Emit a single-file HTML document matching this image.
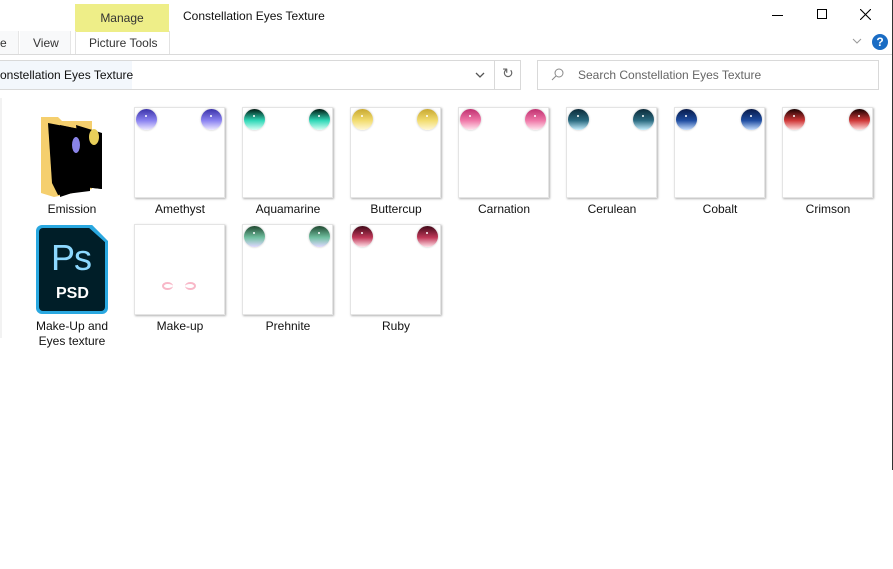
<!DOCTYPE html>
<html><head><meta charset="utf-8"><style>
*{margin:0;padding:0;box-sizing:border-box}
body{width:893px;height:569px;overflow:hidden;background:#fff;font-family:"Segoe UI","Liberation Sans",sans-serif;font-size:12px;color:#000;position:relative}
.a{position:absolute}
.th{position:absolute;width:91px;height:91px;background:#fff;border:1px solid #e4e4e4;box-shadow:1px 1px 2px rgba(0,0,0,.3)}
.eye{position:absolute;width:21px;height:21px;border-radius:50%;top:1px;box-shadow:0 0 2px rgba(0,0,0,.25)}
.eye:after{content:"";position:absolute;left:9px;top:6px;width:2px;height:2px;background:#fff;border-radius:50%}
.lbl{position:absolute;width:108px;text-align:center;font-size:12px;color:#111}
</style></head><body>
<div class="a" style="left:75px;top:4px;width:94px;height:28px;background:#eeee88"></div>
<div class="a" style="left:75px;top:11px;width:94px;text-align:center;color:#333">Manage</div>
<div class="a" style="left:183px;top:9px;color:#111">Constellation Eyes Texture</div>
<div class="a" style="left:0;top:31px;width:19px;height:23px;background:#f8f9fa;border-right:1px solid #e6e6e6"></div>
<div class="a" style="left:0;top:36px;color:#333">e</div>
<div class="a" style="left:20px;top:31px;width:51px;height:23px;background:#f8f9fa;border-right:1px solid #e6e6e6"></div>
<div class="a" style="left:33px;top:36px;color:#333">View</div>
<div class="a" style="left:75px;top:31px;width:95px;height:23px;border-left:1px solid #e2e2e2;border-right:1px solid #e2e2e2"></div>
<div class="a" style="left:89px;top:36px;color:#333">Picture Tools</div>
<div class="a" style="left:0;top:54px;width:893px;height:1px;background:#dadada"></div>
<div class="a" style="left:772px;top:15px;width:11px;height:1px;background:#000"></div>
<div class="a" style="left:817px;top:9px;width:10px;height:10px;border:1px solid #000"></div>
<svg class="a" style="left:860px;top:9px" width="11" height="11"><path d="M0 0L11 11M11 0L0 11" stroke="#000" stroke-width="1.1"/></svg>
<svg class="a" style="left:852px;top:38px" width="10" height="6"><path d="M1 1L5 5L9 1" stroke="#999" fill="none"/></svg>
<div class="a" style="left:872px;top:34px;width:16px;height:16px;border-radius:50%;background:#1a6cc4;color:#fff;font-weight:bold;font-size:12px;text-align:center;line-height:16px">?</div>
<div class="a" style="left:0;top:61px;width:132px;height:28px;background:#f3f7fc"></div>
<div class="a" style="left:0;top:60px;width:521px;height:30px;border:1px solid #d9d9d9;border-left:none"></div>
<div class="a" style="left:0;top:68px;color:#111">onstellation Eyes Texture</div>
<svg class="a" style="left:475px;top:72px" width="10" height="6"><path d="M1 1L5 5L9 1" stroke="#555" fill="none" stroke-width="1.3"/></svg>
<div class="a" style="left:494px;top:61px;width:1px;height:28px;background:#d9d9d9"></div>
<div class="a" style="left:502px;top:65px;color:#666;font-size:14px">↻</div>
<div class="a" style="left:537px;top:60px;width:342px;height:30px;border:1px solid #d9d9d9"></div>
<svg class="a" style="left:551px;top:68px" width="13" height="13"><circle cx="8" cy="5" r="4" stroke="#888" fill="none"/><path d="M5 8L1 12" stroke="#888"/></svg>
<div class="a" style="left:578px;top:68px;color:#666">Search Constellation Eyes Texture</div>
<div class="a" style="left:0;top:98px;width:2px;height:240px;background:#f2f2f2"></div>
<div class="a" style="left:892px;top:0;width:1px;height:470px;background:#333"></div>
<svg class="a" style="left:40px;top:113px" width="66" height="88">
<path d="M1 4L18 4L22 8L52 8L52 76L14 84L1 80Z" fill="#f5cf6e"/>
<path d="M8 10L50 18L50 78L18 82L12 70Z" fill="#000"/>
<path d="M20 12L44 17L44 74L62 76L62 22L44 17L44 76L20 84Z" fill="#000"/>
<path d="M36 12L62 20L62 76L44 74Z" fill="#000"/>
<ellipse cx="36" cy="32" rx="4" ry="8" fill="#8a84e8"/>
<ellipse cx="54" cy="24" rx="5" ry="8" fill="#e8cf5a"/>
</svg>
<div class="lbl" style="left:18px;top:202px">Emission</div>
<div class="a" style="left:36px;top:225px;width:72px;height:89px;background:#2aa8e0;clip-path:polygon(0 0,78% 0,100% 18%,100% 100%,0 100%);border-radius:6px"></div>
<div class="a" style="left:39px;top:228px;width:66px;height:83px;background:#001e28;clip-path:polygon(0 0,76% 0,100% 17%,100% 100%,0 100%);border-radius:4px"></div>
<div class="a" style="left:51px;top:237px;color:#8dd9ff;font-size:36px;font-family:'Liberation Sans',sans-serif;letter-spacing:-1px">Ps</div>
<div class="a" style="left:56px;top:285px;color:#fff;font-size:16px;font-weight:bold;font-family:'Liberation Sans',sans-serif">PSD</div>
<div class="lbl" style="left:18px;top:319px;line-height:15px">Make-Up and<br>Eyes texture</div>
<div id="t"></div>
<script>
var d=[["Amethyst","#3a32a8","#8a82f0","#eeeaff"],["Aquamarine","#001810","#30d8b8","#d8fff4"],["Buttercup","#c8a830","#f2dc70","#fff8d8"],["Carnation","#c03070","#ef78a8","#ffe8f0"],["Cerulean","#0c2a38","#2a6a80","#c8f0ff"],["Cobalt","#081a48","#1e4ca0","#c8e0ff"],["Crimson","#180000","#d03838","#ffe0e0"],["Make-up","","",""],["Prehnite","#204830","#70c0a0","#e0d8ff"],["Ruby","#400818","#c03858","#ffe0e8"]];
var h="";
d.forEach(function(e,i){var c=i<7?i:i-7;var r=i<7?0:1;var x=134+108*c;var y=r?224:107;
h+='<div class="th" style="left:'+x+'px;top:'+y+'px">';
if(e[1]){var g='background:linear-gradient(180deg,'+e[1]+' 0%,'+e[2]+' 55%,'+e[3]+' 100%)';
h+='<div class="eye" style="left:1px;'+g+'"></div><div class="eye" style="left:66px;'+g+'"></div>';}
else{h+='<div class="a" style="left:27px;top:57px;width:11px;height:8px;border:2px solid #f8b8c8;border-radius:50%;border-right:none"></div><div class="a" style="left:50px;top:57px;width:11px;height:8px;border:2px solid #f8b8c8;border-radius:50%;border-left:none"></div>';}
h+='</div><div class="lbl" style="left:'+(x-8)+'px;top:'+(y+95)+'px">'+e[0]+'</div>';});
document.getElementById('t').innerHTML=h;
</script>
</body></html>
